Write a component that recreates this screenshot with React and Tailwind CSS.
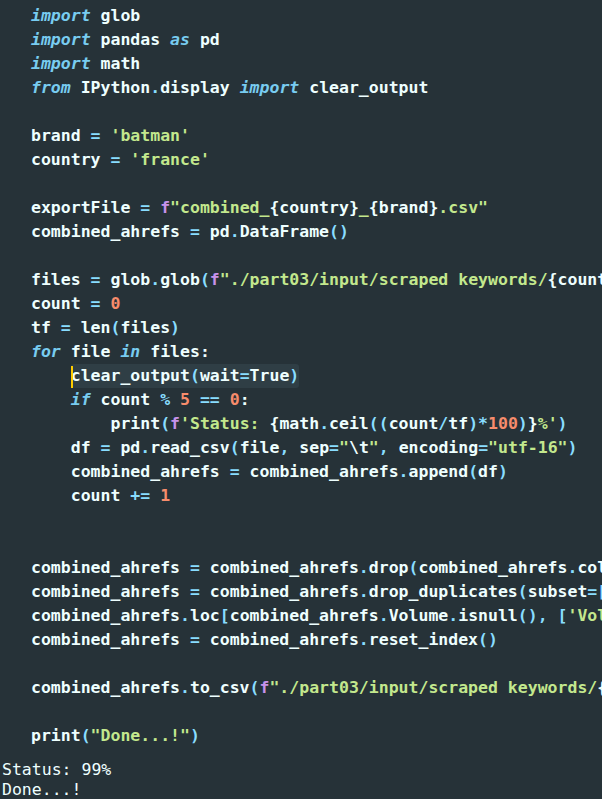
import React from 'react';

// token helpers
const K = ({ children }) => <span className="italic text-[#78ccf0]">{children}</span>;
const P = ({ children }) => <span className="text-[#89ddff]">{children}</span>;
const S = ({ children }) => <span className="text-[#c3e88d]">{children}</span>;
const N = ({ children }) => <span className="text-[#f78c6c]">{children}</span>;
const F = () => <span className="text-[#c792ea]">f</span>;

const Line = ({ children }) => (
  <div className="h-[24px] leading-[24px] whitespace-pre">{children || ' '}</div>
);

const App = () => {
  return (
    <div className="min-h-screen w-full overflow-hidden bg-[#263238] text-[#eeffff] text-[16.5px]" style={{ fontFamily: '"DejaVu Sans Mono", monospace' }}>
      <div className="pl-[31px] pt-[4px] font-bold">
        <Line><K>import</K> glob</Line>
        <Line><K>import</K> pandas <K>as</K> pd</Line>
        <Line><K>import</K> math</Line>
        <Line><K>from</K> IPython<P>.</P>display <K>import</K> clear_output</Line>
        <Line />
        <Line>brand <P>=</P> <S>'batman'</S></Line>
        <Line>country <P>=</P> <S>'france'</S></Line>
        <Line />
        <Line>exportFile <P>=</P> <F /><S>"combined_</S>{'{country}'}<S>_</S>{'{brand}'}<S>.csv"</S></Line>
        <Line>combined_ahrefs <P>=</P> pd<P>.</P>DataFrame<P>()</P></Line>
        <Line />
        <Line>files <P>=</P> glob<P>.</P>glob<P>(</P><F /><S>"./part03/input/scraped keywords/</S>{'{country}'}<S>/*.csv"</S><P>)</P></Line>
        <Line>count <P>=</P> <N>0</N></Line>
        <Line>tf <P>=</P> len<P>(</P>files<P>)</P></Line>
        <Line><K>for</K> file <K>in</K> files:</Line>
        <Line>
          {'    '}
          <span className="inline-block w-[2px] h-[22px] bg-[#ffcc00] align-middle -mr-[2px] relative z-10" />
          <span className="inline-block h-[24px] bg-[#2f3e45] rounded-[3px] align-top">clear_output<P>(</P>wait<P>=</P>True<P>)</P></span>
        </Line>
        <Line>{'    '}<K>if</K> count <P>%</P> <N>5</N> <P>==</P> <N>0</N>:</Line>
        <Line>{'        '}print<P>(</P><F /><S>'Status: </S>{'{'}math<P>.</P>ceil<P>((</P>count<P>/</P>tf<P>)*</P><N>100</N><P>)</P>{'}'}<S>%'</S><P>)</P></Line>
        <Line>{'    '}df <P>=</P> pd<P>.</P>read_csv<P>(</P>file<P>,</P> sep<P>=</P><S>"</S>\t<S>"</S><P>,</P> encoding<P>=</P><S>"utf-16"</S><P>)</P></Line>
        <Line>{'    '}combined_ahrefs <P>=</P> combined_ahrefs<P>.</P>append<P>(</P>df<P>)</P></Line>
        <Line>{'    '}count <P>+=</P> <N>1</N></Line>
        <Line />
        <Line />
        <Line>combined_ahrefs <P>=</P> combined_ahrefs<P>.</P>drop<P>(</P>combined_ahrefs<P>.</P>columns<P>[</P><N>0</N><P>],</P> axis<P>=</P><N>1</N><P>)</P></Line>
        <Line>combined_ahrefs <P>=</P> combined_ahrefs<P>.</P>drop_duplicates<P>(</P>subset<P>=[</P><S>'Keyword'</S><P>])</P></Line>
        <Line>combined_ahrefs<P>.</P>loc<P>[</P>combined_ahrefs<P>.</P>Volume<P>.</P>isnull<P>(),</P> <P>[</P><S>'Volume'</S><P>]]</P> <P>=</P> <N>0</N></Line>
        <Line>combined_ahrefs <P>=</P> combined_ahrefs<P>.</P>reset_index<P>()</P></Line>
        <Line />
        <Line>combined_ahrefs<P>.</P>to_csv<P>(</P><F /><S>"./part03/input/scraped keywords/</S>{'{exportFile}'}<S>"</S><P>)</P></Line>
        <Line />
        <Line>print<P>(</P><S>"Done...!"</S><P>)</P></Line>
      </div>
      <div className="pl-[2px] mt-[12px] leading-[20px] whitespace-pre font-normal">
        <div>Status: 99%</div>
        <div>Done...!</div>
      </div>
    </div>
  );
};

export default App;
